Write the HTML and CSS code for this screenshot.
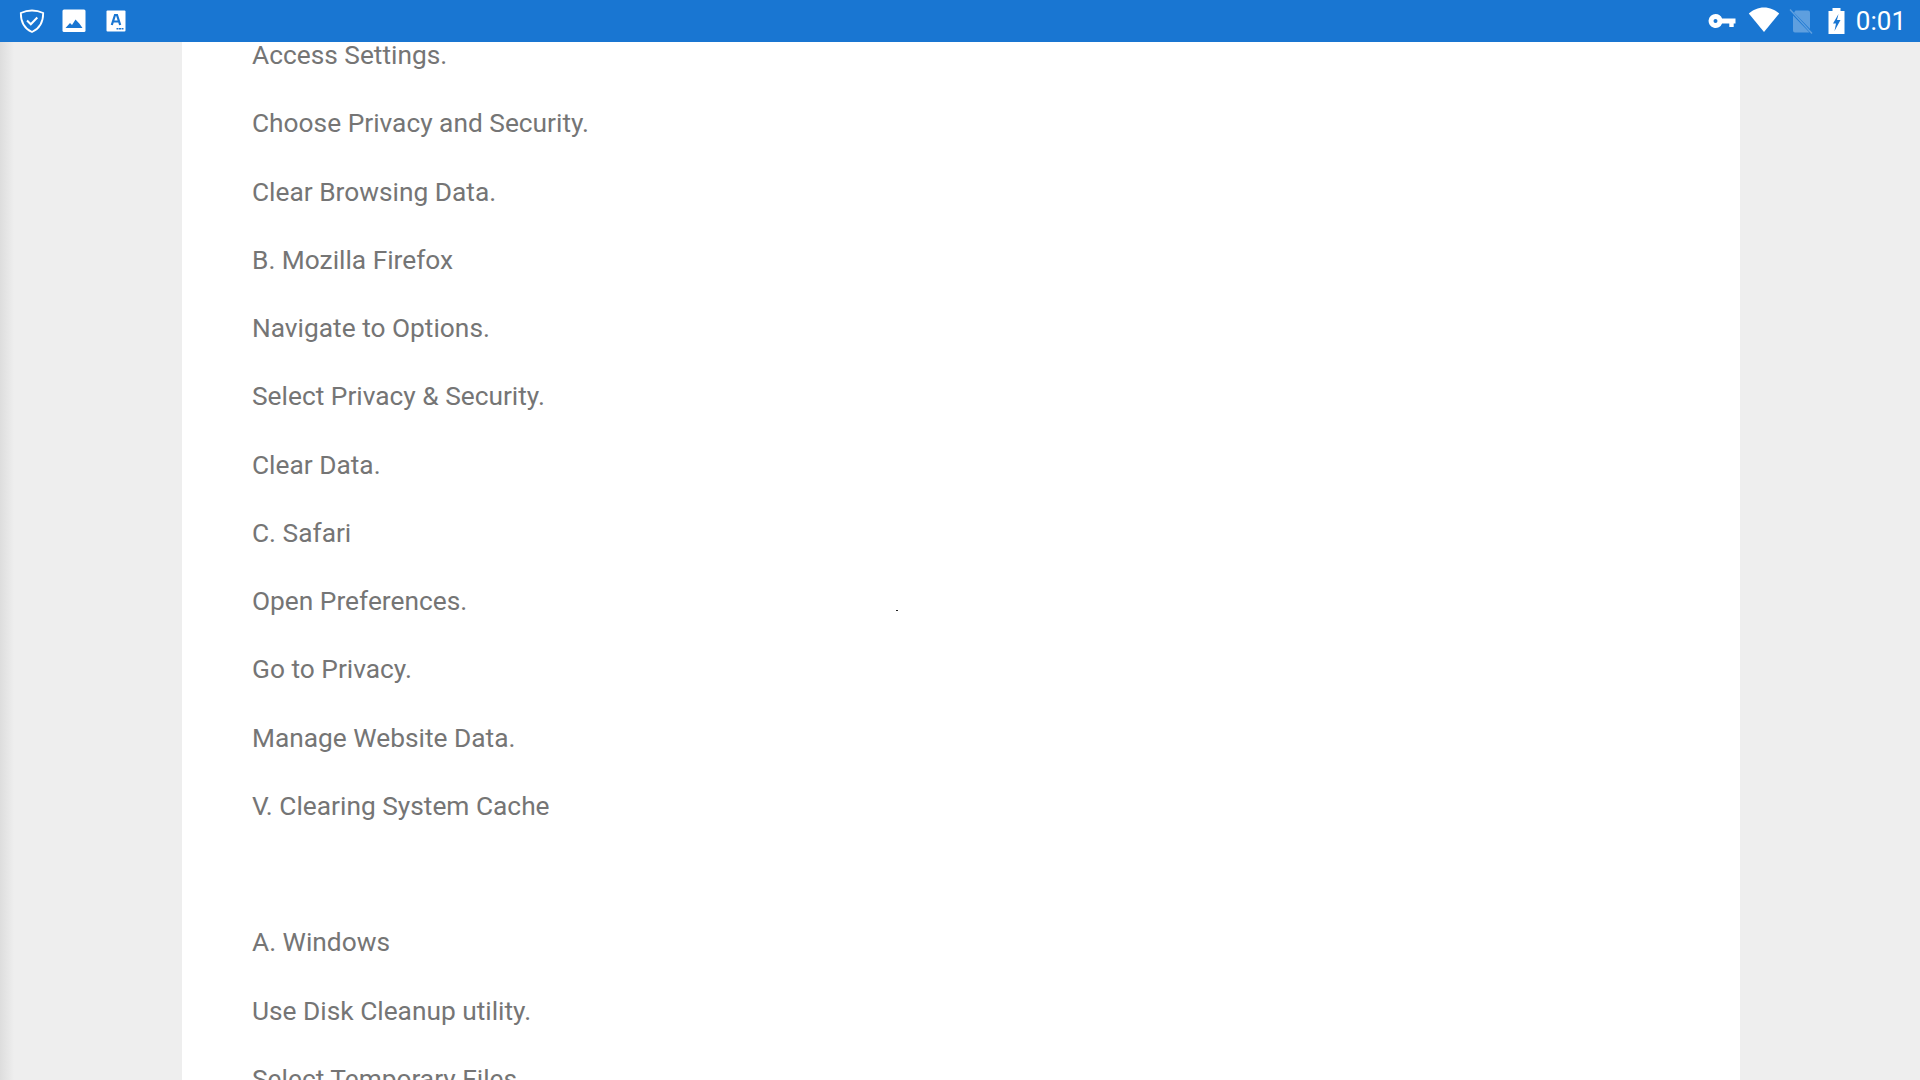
FILE: index.html
```html
<!DOCTYPE html>
<html lang="en">
<head>
<meta charset="utf-8">
<title>Clearing Cache</title>
<link rel="stylesheet" href="styles.css">
</head>
<body>
<header class="status-bar">
  <div class="status-group left">
    <svg class="icon shield" viewBox="0 0 26 24"><path d="M13 1.500C9.500 1.500 5 2.500 1.800 4c0 8 2 15 11.200 19C22 19 24.200 12 24.200 4 21 2.500 16.500 1.500 13 1.500Z" fill="none" stroke="#fff" stroke-width="1.800"/><path d="M8 11.500l3.800 3.800 6.500-6.800" fill="none" stroke="#fff" stroke-width="2"/></svg>
    <svg class="icon picture" viewBox="0 0 24 24"><rect x="0.500" y="0.500" width="23" height="22.500" rx="1.500" fill="#fff"/><path d="M3.500 19l4.500-5 2 2 3.500-5.500 4 4.200 3 4.300Z" fill="#1976d2"/></svg>
    <svg class="icon letter" viewBox="0 0 20 22"><rect x="0.500" y="0.500" width="19" height="21" rx="1" fill="#fff"/><path d="M5.800 15L9 5h2l3.200 10M7 11.500h6" fill="none" stroke="#1976d2" stroke-width="2.200"/><path d="M10.500 18h2v1.500h-2zM13 18h2v1.500h-2zM15.500 18h2v1.500h-2z" fill="#1976d2"/></svg>
  </div>
  <div class="status-group right">
    <svg class="icon key" viewBox="0 0 28 16"><path fill-rule="evenodd" d="M7.500 1a7 7 0 0 1 6.600 4.500H27.500v5h-1.800v3.500h-4.400v-3.500h-7.200A7 7 0 1 1 7.500 1Zm0 5a2 2 0 1 0 0 4 2 2 0 0 0 0-4Z" fill="#fff"/></svg>
    <svg class="icon wifi" viewBox="0 0 32 26"><path d="M16 25L.8 6.500C5 3 10 .5 16 .5s11 2.500 15.200 6Z" fill="#fff"/></svg>
    <svg class="icon sim" viewBox="0 0 24 26"><path d="M6.500 2.500H19a2 2 0 0 1 2 2V21L5 4.500ZM4 7.500 20.500 24.500H6a2 2 0 0 1-2-2Z" fill="#fff" opacity="0.300"/><path d="M1 1.500l22 24" stroke="#fff" stroke-width="1.400" opacity="0.300"/></svg>
    <svg class="icon battery" viewBox="0 0 17 26"><path fill-rule="evenodd" d="M4.500 0h8v3h4v23H.5V3h4Zm6 6L5 15.500h3L6.500 23l6-11H9Z" fill="#fff"/></svg>
    <span class="clock">0:01</span>
  </div>
</header>
<main class="page">
  <article class="sheet">
    <p>Access Settings.</p>
    <p>Choose Privacy and Security.</p>
    <p>Clear Browsing Data.</p>
    <p>B. Mozilla Firefox</p>
    <p>Navigate to Options.</p>
    <p>Select Privacy &amp; Security.</p>
    <p>Clear Data.</p>
    <p>C. Safari</p>
    <p>Open Preferences.</p>
    <p>Go to Privacy.</p>
    <p>Manage Website Data.</p>
    <p>V. Clearing System Cache</p>
    <p class="empty"></p>
    <p>A. Windows</p>
    <p>Use Disk Cleanup utility.</p>
    <p>Select Temporary Files.</p>
    <span class="speck"></span>
  </article>
</main>
</body>
</html>
```
FILE: styles.css
```css
html, body {
  margin: 0;
  height: 100%;
  overflow: hidden;
}
body {
  background: #eeeeee;
  font-family: Roboto, "Noto Sans", sans-serif;
}
.status-bar {
  position: absolute;
  top: 0;
  left: 0;
  right: 0;
  z-index: 2;
  height: 42px;
  background: #1976d2;
  display: flex;
  justify-content: space-between;
  align-items: center;
  padding: 0 14px 0 19px;
}
.status-group {
  display: flex;
  align-items: center;
}
.left { gap: 17px; }
.icon { display: block; }
.shield { width: 26px; height: 24px; }
.picture { width: 24px; height: 24px; }
.letter { width: 20px; height: 22px; margin-left: 3px; }
.key { width: 28px; height: 16px; }
.wifi { width: 32px; height: 26px; margin-left: 12px; margin-bottom: 2px; }
.sim { width: 24px; height: 26px; margin-left: 9px; }
.battery { width: 17px; height: 26px; margin-left: 15px; }
.clock {
  margin-left: 11px;
  color: #fff;
  font-size: 26px;
  line-height: 42px;
}
.page {
  height: 100%;
  box-sizing: border-box;
  padding: 0 180px 0 182px;
  background: linear-gradient(to right, #dddddd 0, #eeeeee 14px);
}
.sheet {
  position: relative;
  height: 100%;
  box-sizing: border-box;
  padding: 21px 70px 0;
  background: #fff;
  color: #757575;
  font-size: 26.3px;
}
.sheet p {
  margin: 0;
  height: 68.25px;
  line-height: 68.25px;
}
.speck {
  position: absolute;
  left: 714px;
  top: 610px;
  width: 2px;
  height: 1px;
  background: #222;
}
```
